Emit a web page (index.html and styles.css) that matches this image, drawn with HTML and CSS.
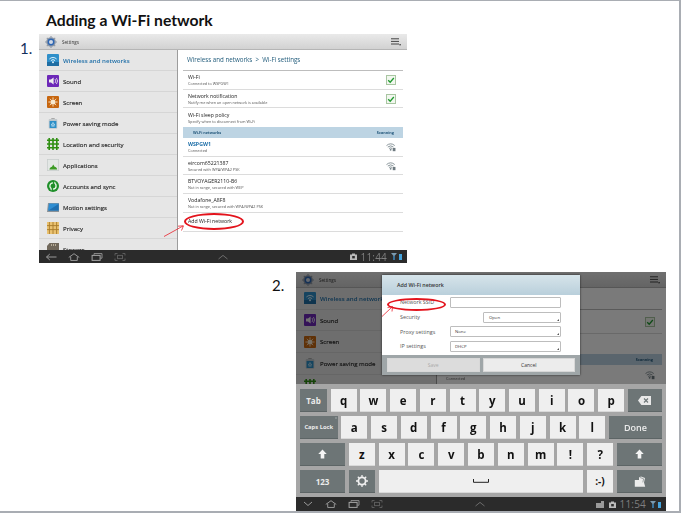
FILE: index.html
```html
<!DOCTYPE html>
<html lang="en">
<head>
<meta charset="utf-8">
<title>Adding a Wi-Fi network</title>
<link rel="stylesheet" href="styles.css">
</head>
<body>
<svg class="defs" width="0" height="0" aria-hidden="true">
  <symbol id="i-gear" viewBox="0 0 16 16"><circle cx="8" cy="8" r="6.4" fill="#8d97a5"/><circle cx="8" cy="8" r="4.6" fill="#2d66b3"/><circle cx="8" cy="8" r="2.7" fill="#cfd8e6"/><path d="M8 0v2M8 14v2M0 8h2M14 8h2M2.4 2.4l1.4 1.4M12.2 12.2l1.4 1.4M2.4 13.6l1.4-1.4M12.2 3.8l1.4-1.4" stroke="#8d97a5" stroke-width="1.5"/></symbol>
  <symbol id="i-wifi" viewBox="0 0 12 12"><rect width="12" height="12" rx="1" fill="#2f8fc9"/><rect y="8" width="12" height="4" fill="#1f6ea3"/><path d="M2.4 5a5 5 0 0 1 7.2 0M3.9 6.6a3 3 0 0 1 4.2 0" stroke="#d9f0fb" fill="none"/><circle cx="6" cy="8.3" r="1" fill="#d9f0fb"/></symbol>
  <symbol id="i-sound" viewBox="0 0 12 12"><rect width="12" height="12" rx="1" fill="#6d28b8"/><path d="M2 4.6h2L6.6 2.6v6.8L4 7.4H2z" fill="#eee"/><path d="M8 4a3 3 0 0 1 0 4M9.4 3a4.6 4.6 0 0 1 0 6" stroke="#eee" fill="none" stroke-width=".8"/></symbol>
  <symbol id="i-screen" viewBox="0 0 12 12"><rect width="12" height="12" rx="1" fill="#c7660f"/><circle cx="6" cy="6" r="2.6" fill="#f7e9d0"/><path d="M6 1.4v1.6M6 9v1.6M1.4 6H3M9 6h1.6M2.8 2.8l1.1 1.1M8.1 8.1l1.1 1.1M2.8 9.2l1.1-1.1M8.1 3.9l1.1-1.1" stroke="#f7e9d0" stroke-width=".9"/></symbol>
  <symbol id="i-power" viewBox="0 0 12 14"><path d="M4 1.4h4v1.2H4z" fill="#9a9a9a"/><rect x="1" y="2.4" width="10" height="11.2" rx="1" fill="#c3c9cc"/><rect x="2" y="4.6" width="8" height="8.2" fill="#2c8fc7"/><path d="M4 9.4l2-3 2 3zM4.2 10.6h3.6" stroke="#dff2fb" stroke-width=".8" fill="none"/></symbol>
  <symbol id="i-grid" viewBox="0 0 12 12"><path d="M0 2.2h12M0 6h12M0 9.8h12M2.2 0v12M6 0v12M9.8 0v12" stroke="#2f8f12" stroke-width="1.6"/></symbol>
  <symbol id="i-apps" viewBox="0 0 12 12"><rect width="12" height="12" fill="#c9cfcd"/><rect x=".8" y=".8" width="10.4" height="10.4" fill="#e3e7e5"/><path d="M2.4 10.6c.4-2.2 1.6-2.6 2.6-2.8l1.2-2.2 1.4 2.2c1.2.2 2.2.6 2.6 2.8z" fill="#3c9b24"/></symbol>
  <symbol id="i-sync" viewBox="0 0 12 12"><circle cx="6" cy="6" r="6" fill="#1f8f2a"/><circle cx="6" cy="6" r="3.1" fill="none" stroke="#e8f6e6" stroke-width="1.3"/><path d="M6 .8l2.6 2.2L6 5zM6 11.2L3.4 9 6 7z" fill="#1f8f2a"/><path d="M7.6 1.6l1.4 1.6-2 .5zM4.4 10.4L3 8.8l2-.5z" fill="#e8f6e6"/></symbol>
  <symbol id="i-motion" viewBox="0 0 12 10"><path d="M1 1h11v9H0z" fill="#8b9298"/><path d="M2 1.6h9.6v7H1z" fill="#2f8ed2"/><path d="M1.4 8.6L11.6 2v6.6z" fill="#1f6fb0"/></symbol>
  <symbol id="i-privacy" viewBox="0 0 12 12"><rect width="12" height="12" fill="#eac271"/><path d="M0 3.6h12M0 7.6h12M2.4 0v12M6 0v12M9.6 0v12" stroke="#a87a2a" stroke-width=".9"/></symbol>
  <symbol id="i-storage" viewBox="0 0 12 12"><path d="M2.5 0H12v12H0V3z" fill="#70675a"/><path d="M4 1h1v2H4zM6 1h1v2H6zM8 1h1v2H8z" fill="#b7ad98"/></symbol>
  <symbol id="i-check" viewBox="0 0 10 10"><rect x=".5" y=".5" width="9" height="9" fill="#f2f7ef" stroke="#a9c6a2"/><path d="M2.2 5.2l2 2 3.6-4.2" stroke="#1f9a2f" stroke-width="1.3" fill="none"/></symbol>
  <symbol id="i-signal" viewBox="0 0 11 10"><path d="M.6 3.4a7 7 0 0 1 9 0M2 5a5 5 0 0 1 6.2 0M3.4 6.6a2.8 2.8 0 0 1 3.4 0" stroke="#7d8a90" stroke-width="1" fill="none"/><circle cx="5.1" cy="8" r="1" fill="#7d8a90"/><rect x="7.4" y="6" width="3" height="3.6" fill="#6e7a80"/></symbol>
  <symbol id="i-menu" viewBox="0 0 10 8"><path d="M0 .8h8M0 3.4h8M0 6h8" stroke="#444" stroke-width="1"/><rect x="8.4" y="6" width="1.4" height="1.4" fill="#444"/></symbol>
  <symbol id="i-back" viewBox="0 0 12 8"><path d="M11.5 4H1.5M4.8 1L1.5 4l3.3 3" stroke="#9a9a9a" fill="none"/></symbol>
  <symbol id="i-down" viewBox="0 0 12 8"><path d="M2 2l4 3.5L10 2" stroke="#9a9a9a" fill="none"/></symbol>
  <symbol id="i-home" viewBox="0 0 13 9"><path d="M.6 5L6.5.8 12.4 5M2.8 4v4.4h7.4V4" stroke="#a4a4a4" fill="none"/></symbol>
  <symbol id="i-recent" viewBox="0 0 11 8"><path d="M2.5 1.8V.6h8v4.6H9" stroke="#8e8e8e" fill="none"/><rect x=".6" y="2.4" width="8" height="5" fill="none" stroke="#a4a4a4"/></symbol>
  <symbol id="i-shot" viewBox="0 0 11 8"><path d="M.5 2.5V.5h2.5M8 .5h2.500v2M10.500 5.500v2H8M3 7.500H.5v-2" stroke="#5c5c5c" fill="none"/><rect x="3" y="2.400" width="5" height="3.200" fill="none" stroke="#5c5c5c"/></symbol>
  <symbol id="i-up" viewBox="0 0 12 6"><path d="M1.500 5L6 1.400 10.500 5" stroke="#6c6c6c" fill="none"/></symbol>
  <symbol id="i-cam" viewBox="0 0 7 7"><path d="M0 1.500h2V.4h3v1.100h2V7H0z" fill="#bbb"/><rect x="2.200" y="3" width="2.600" height="2.400" fill="#2c2c2c"/></symbol>
  <symbol id="i-sd" viewBox="0 0 8 7"><path d="M0 2h5V0h3v7H0z" fill="#9a9a9a"/></symbol>
  <symbol id="i-stat" viewBox="0 0 11 7"><path d="M0 0h6L3 3.500z" fill="#7a9ab0"/><path d="M2.300 3h1.400v4H2.300z" fill="#3f8fc8"/><rect x="8" y="1" width="3" height="6" fill="#45a3dc"/></symbol>
  <symbol id="i-shift" viewBox="0 0 10 11"><path d="M5 .5L9.700 5.500H7V10.500H3V5.500H.3z" fill="#f4f4f4"/></symbol>
  <symbol id="i-bksp" viewBox="0 0 13 9"><path d="M3.400 0H13V9H3.400L0 4.500z" fill="#e8e8e8"/><path d="M6 2.500l4 4M10 2.500l-4 4" stroke="#6c7576" stroke-width="1.100"/></symbol>
  <symbol id="i-kgear" viewBox="0 0 12 12"><circle cx="6" cy="6" r="3.600" fill="none" stroke="#efefef" stroke-width="1.800"/><path d="M6 0v2.400M6 9.600V12M0 6h2.400M9.600 6H12M1.800 1.800l1.700 1.700M8.500 8.500l1.700 1.700M1.800 10.200l1.700-1.700M8.500 3.500l1.700-1.700" stroke="#efefef" stroke-width="1.300"/></symbol>
  <symbol id="i-clip" viewBox="0 0 12 11"><path d="M.8 4H5V1.500l2-1 4 1.500-1 4.500 1.200 4.200H.8z" fill="#ececec"/><path d="M6 1.500l3.600 1.300-.8 3.600" stroke="#7a8283" stroke-width=".7" fill="none"/></symbol>
  <symbol id="i-space" viewBox="0 0 16 4"><path d="M.5 0v3.300h15V0" stroke="#222" stroke-width="1" fill="none"/></symbol>
</svg>

<main class="slide">
  <h1 class="slide-title">Adding a Wi-Fi network</h1>

  <section class="step step-one">
    <span class="step-num">1.</span>
    <div class="screen screen-one">
      <div class="stage">
        <header class="titlebar">
          <svg class="app-gear"><use href="#i-gear"/></svg>
          <span class="app-name">Settings</span>
          <svg class="menu-btn"><use href="#i-menu"/></svg>
        </header>
        <div class="panes">
          <nav class="side">
            <div class="side-row active"><svg class="side-icon"><use href="#i-wifi"/></svg>Wireless and networks</div>
            <div class="side-row"><svg class="side-icon"><use href="#i-sound"/></svg>Sound</div>
            <div class="side-row"><svg class="side-icon"><use href="#i-screen"/></svg>Screen</div>
            <div class="side-row"><svg class="side-icon"><use href="#i-power"/></svg>Power saving mode</div>
            <div class="side-row"><svg class="side-icon"><use href="#i-grid"/></svg>Location and security</div>
            <div class="side-row"><svg class="side-icon"><use href="#i-apps"/></svg>Applications</div>
            <div class="side-row"><svg class="side-icon"><use href="#i-sync"/></svg>Accounts and sync</div>
            <div class="side-row"><svg class="side-icon"><use href="#i-motion"/></svg>Motion settings</div>
            <div class="side-row"><svg class="side-icon"><use href="#i-privacy"/></svg>Privacy</div>
            <div class="side-row"><svg class="side-icon"><use href="#i-storage"/></svg>Storage</div>
          </nav>
          <div class="detail">
            <div class="crumb">Wireless and networks &nbsp;&gt;&nbsp; Wi-Fi settings</div>
            <div class="list">
              <div class="item"><div><div class="item-name">Wi-Fi</div><div class="item-sub">Connected to WSPGW1</div></div><svg class="check"><use href="#i-check"/></svg></div>
              <div class="item"><div><div class="item-name">Network notification</div><div class="item-sub">Notify me when an open network is available</div></div><svg class="check"><use href="#i-check"/></svg></div>
              <div class="item last"><div><div class="item-name">Wi-Fi sleep policy</div><div class="item-sub">Specify when to disconnect from Wi-Fi</div></div></div>
              <div class="group"><span>Wi-Fi networks</span><span>Scanning</span></div>
              <div class="item"><div><div class="item-name linked">WSPGW1</div><div class="item-sub">Connected</div></div><svg class="signal"><use href="#i-signal"/></svg></div>
              <div class="item"><div><div class="item-name">eircom65221387</div><div class="item-sub">Secured with WPA/WPA2 PSK</div></div><svg class="signal"><use href="#i-signal"/></svg></div>
              <div class="item"><div><div class="item-name">BTVOYAGER2110-B6</div><div class="item-sub">Not in range, secured with WEP</div></div></div>
              <div class="item"><div><div class="item-name">Vodafone_A8F8</div><div class="item-sub">Not in range, secured with WPA/WPA2 PSK</div></div></div>
              <div class="item"><div class="item-name">Add Wi-Fi network</div></div>
            </div>
          </div>
        </div>
      </div>
      <footer class="navbar">
        <svg class="nav-icon"><use href="#i-back"/></svg>
        <svg class="nav-icon"><use href="#i-home"/></svg>
        <svg class="nav-icon"><use href="#i-recent"/></svg>
        <svg class="nav-icon"><use href="#i-shot"/></svg>
        <svg class="nav-up"><use href="#i-up"/></svg>
        <span class="tray">
          <svg class="tray-cam"><use href="#i-cam"/></svg>
          <span class="clock">11:44</span>
          <svg class="tray-stat"><use href="#i-stat"/></svg>
        </span>
      </footer>
      <span class="ring ring-one"></span>
      <svg class="pointer pointer-one" viewBox="0 0 22 13"><path d="M1 12.500L20 2M15 2.200L20.500 1.800 18.500 6.500" fill="none" stroke="#e8202a" stroke-width=".8"/></svg>
    </div>
  </section>

  <section class="step step-two">
    <span class="step-num">2.</span>
    <div class="screen screen-two">
      <div class="stage stage-dim">
        <header class="titlebar">
          <svg class="app-gear"><use href="#i-gear"/></svg>
          <span class="app-name">Settings</span>
          <svg class="menu-btn"><use href="#i-menu"/></svg>
        </header>
        <div class="panes">
          <nav class="side">
            <div class="side-row active"><svg class="side-icon"><use href="#i-wifi"/></svg>Wireless and networks</div>
            <div class="side-row"><svg class="side-icon"><use href="#i-sound"/></svg>Sound</div>
            <div class="side-row"><svg class="side-icon"><use href="#i-screen"/></svg>Screen</div>
            <div class="side-row"><svg class="side-icon"><use href="#i-power"/></svg>Power saving mode</div>
            <div class="side-row"><svg class="side-icon"><use href="#i-grid"/></svg></div>
          </nav>
          <div class="detail">
            <div class="crumb"></div>
            <div class="list">
              <div class="item"><span></span><svg class="check"><use href="#i-check"/></svg></div>
              <div class="item last"></div>
              <div class="group"><span></span><span>Scanning</span></div>
              <div class="item"><div><div class="item-name">&nbsp;</div><div class="item-sub">Connected</div></div><svg class="signal"><use href="#i-signal"/></svg></div>
            </div>
          </div>
        </div>
        <div class="scrim"></div>
        <div class="dialog">
          <div class="dialog-head">Add Wi-Fi network</div>
          <div class="dialog-body">
            <div class="field"><span>Network SSID</span><span class="control"></span></div>
            <div class="field"><span>Security</span><span class="control short pick">Open</span></div>
            <div class="field"><span>Proxy settings</span><span class="control pick">None</span></div>
            <div class="field"><span>IP settings</span><span class="control pick">DHCP</span></div>
          </div>
          <div class="dialog-foot">
            <span class="dlg-btn off">Save</span>
            <span class="dlg-btn">Cancel</span>
          </div>
        </div>
      </div>
      <div class="keyboard">
        <div class="kb-row">
          <span class="key fn w-tab">Tab</span>
          <span class="key">q</span><span class="key">w</span><span class="key">e</span><span class="key">r</span><span class="key">t</span><span class="key">y</span><span class="key">u</span><span class="key">i</span><span class="key">o</span><span class="key">p</span>
          <span class="key fn w-bksp"><svg class="k-bksp"><use href="#i-bksp"/></svg></span>
        </div>
        <div class="kb-row">
          <span class="key fn w-caps small">Caps Lock</span>
          <span class="key">a</span><span class="key">s</span><span class="key">d</span><span class="key">f</span><span class="key">g</span><span class="key">h</span><span class="key">j</span><span class="key">k</span><span class="key">l</span>
          <span class="key fn w-done">Done</span>
        </div>
        <div class="kb-row">
          <span class="key fn w-shift"><svg class="k-shift"><use href="#i-shift"/></svg></span>
          <span class="key">z</span><span class="key">x</span><span class="key">c</span><span class="key">v</span><span class="key">b</span><span class="key">n</span><span class="key">m</span><span class="key">!</span><span class="key">?</span>
          <span class="key fn w-shift"><svg class="k-shift"><use href="#i-shift"/></svg></span>
        </div>
        <div class="kb-row">
          <span class="key fn w-shift num">123</span>
          <span class="key fn"><svg class="k-gear"><use href="#i-kgear"/></svg></span>
          <span class="key w-space"><svg class="k-space"><use href="#i-space"/></svg></span>
          <span class="key smile">:-)</span>
          <span class="key fn w-shift"><svg class="k-clip"><use href="#i-clip"/></svg></span>
        </div>
      </div>
      <footer class="navbar">
        <svg class="nav-icon"><use href="#i-down"/></svg>
        <svg class="nav-icon"><use href="#i-home"/></svg>
        <svg class="nav-icon"><use href="#i-recent"/></svg>
        <svg class="nav-icon"><use href="#i-shot"/></svg>
        <svg class="nav-up"><use href="#i-up"/></svg>
        <span class="tray">
          <svg class="tray-sd"><use href="#i-sd"/></svg>
          <svg class="tray-cam"><use href="#i-cam"/></svg>
          <span class="clock">11:54</span>
          <svg class="tray-stat"><use href="#i-stat"/></svg>
        </span>
      </footer>
      <span class="ring ring-two"></span>
      <svg class="pointer pointer-two" viewBox="0 0 13 12"><path d="M1 11.500L11 2M6.500 2.600L11.500 1.500 11 6.500" fill="none" stroke="#e8202a" stroke-width=".8"/></svg>
    </div>
  </section>
</main>
</body>
</html>
```

FILE: styles.css
```css
* { box-sizing: border-box; }
html, body { margin: 0; padding: 0; background: #fff; }
body { width: 681px; height: 513px; overflow: hidden; font-family: "Open Sans", "Liberation Sans", sans-serif; }
.defs { position: absolute; }
svg { display: block; }

.slide {
  width: 681px;
  height: 513px;
  border-top: 1px solid #a9adb3;
  border-right: 2px solid #a9adb3;
  border-bottom: 2px solid #a9adb3;
  overflow: hidden;
}
.slide-title {
  margin: 0 0 0 46px;
  height: 33px;
  padding-top: 9px;
  font: bold 15.7px/20px Lato, "Open Sans", sans-serif;
  color: #111;
}
.step { display: flex; align-items: flex-start; }
.step-one { padding-left: 20px; }
.step-two { padding-left: 272px; margin-top: 9px; }
.step-num {
  width: 19px;
  padding-top: 6px;
  font: 15px/16px Lato, sans-serif;
  color: #12305c;
}
.step-two .step-num { width: 24px; padding-top: 5px; color: #111; }

.screen { position: relative; filter: blur(.4px); overflow: hidden; display: flex; flex-direction: column; }
.screen-one { width: 368px; height: 229px; }
.screen-two { width: 370px; height: 239px; }

.stage { position: relative; display: flex; flex-direction: column; flex: 1; min-height: 0; overflow: hidden; }
.titlebar {
  flex: none;
  height: 16px;
  display: flex;
  align-items: center;
  padding: 0 6px;
  background: linear-gradient(#e9e9e9, #d2d2d2);
  border-bottom: 1px solid #b5b5b5;
}
.app-gear { width: 12px; height: 12px; }
.app-name { margin-left: 5px; font-size: 4.6px; color: #333; }
.menu-btn { width: 10px; height: 8px; margin-left: auto; }

.panes { flex: 1; display: flex; min-height: 0; }
.side { flex: none; width: 139px; background: #e6e6e6; border-right: 1px solid #9c9c9c; overflow: hidden; }
.side-row {
  height: 21px;
  display: flex;
  align-items: center;
  padding-left: 8px;
  font-size: 6.1px;
  color: #2c2c2c;
  border-bottom: 1px solid #d6d6d6;
  -webkit-text-stroke: .15px #2c2c2c;
}
.side-row.active { color: #1f6fa8; font-weight: 600; -webkit-text-stroke: 0; }
.side-icon { width: 12px; height: 12px; margin-right: 4px; flex: none; }
.detail { flex: 1; background: #fff; padding: 0 4px 0 5px; min-width: 0; }
.crumb {
  height: 21px;
  padding: 5px 0 0 4px;
  font-size: 6.2px;
  line-height: 10px;
  color: #1f5a7a;
  border-bottom: 1px solid #bdbdbd;
}
.item {
  height: 18.7px;
  display: flex;
  align-items: center;
  justify-content: space-between;
  padding: 0 7px 0 5px;
  border-bottom: 1px solid #dcdcdc;
}
.item.last { border-bottom: 0; }
.item-name { font-size: 5.2px; line-height: 7px; color: #222; }
.item-name.linked { color: #1f6fa8; font-weight: 700; }
.item-sub { font-size: 3.8px; line-height: 5px; color: #555; }
.check { width: 10px; height: 10px; }
.signal { width: 10px; height: 10px; }
.group {
  height: 11px;
  display: flex;
  justify-content: space-between;
  align-items: center;
  padding: 0 9px 0 10px;
  background: #bdd4e3;
  font-size: 3.8px;
  font-weight: 700;
  color: #1f5478;
}

.navbar {
  flex: none;
  height: 13px;
  display: flex;
  align-items: center;
  gap: 11px;
  padding-left: 6px;
  background: #2b2b2b;
}
.screen-two .navbar { height: 14px; }
.nav-icon { width: 12px; height: 8px; flex: none; }
.nav-up { width: 12px; height: 6px; margin-left: 80px; }
.tray { margin-left: auto; display: flex; align-items: center; gap: 4px; padding-right: 5px; }
.tray-cam { width: 7px; height: 7px; }
.tray-sd { width: 8px; height: 7px; margin-right: 1px; }
.tray-stat { width: 11px; height: 7px; }
.clock { font-size: 10px; line-height: 12px; color: #7f7f7f; letter-spacing: .2px; }

.ring { position: absolute; border: 2px solid #e3131c; border-radius: 50%; }
.ring-one { left: 145px; top: 179px; width: 60px; height: 17px; }
.ring-two { left: 91px; top: 26px; width: 59px; height: 13px; }
.pointer { position: absolute; }
.pointer-one { left: 124px; top: 190px; width: 22px; height: 13px; }
.pointer-two { left: 85px; top: 33px; width: 13px; height: 12px; }

.stage-dim .side-row { height: 21.7px; }
.stage-dim .side { width: 141px; }
.stage-dim .detail { padding: 0 4px; }
.stage-dim .crumb { height: 22px; }
.stage-dim .item { height: 20px; }
.stage-dim .item:first-child { height: 24px; }
.scrim { position: absolute; inset: 0; background: rgba(0, 0, 0, .52); }
.dialog {
  position: absolute;
  left: 86px;
  top: 3px;
  width: 198px;
  height: 100px;
  display: flex;
  flex-direction: column;
  box-shadow: 0 0 2px rgba(0, 0, 0, .7);
}
.dialog-head {
  height: 20px;
  padding-left: 15px;
  background: linear-gradient(#d6e4ea, #b9cfdb);
  font-size: 5.3px;
  line-height: 20px;
  font-weight: 600;
  color: #333;
}
.dialog-body { height: 60px; background: #fff; }
.field {
  height: 14.7px;
  display: flex;
  align-items: center;
  justify-content: space-between;
  padding: 0 19px 0 18px;
  font-size: 5.4px;
  color: #555;
}
.control {
  position: relative;
  width: 111px;
  height: 11px;
  padding-left: 4px;
  border: 1px solid #bdbdbd;
  border-radius: 1px;
  font-size: 4.3px;
  line-height: 9px;
  color: #333;
  background: #fff;
}
.control.short { width: 78px; padding-left: 5px; }
.pick::after {
  content: "";
  position: absolute;
  right: 1px;
  bottom: 1px;
  border: 1.5px solid transparent;
  border-right-color: #555;
  border-bottom-color: #555;
}
.dialog-foot {
  height: 20px;
  display: flex;
  gap: 3px;
  padding: 3px 5px;
  background: #9fa6a8;
}
.dlg-btn {
  flex: 1;
  background: #ececec;
  border: 1px solid #d8d8d8;
  font-size: 5px;
  line-height: 12px;
  text-align: center;
  color: #333;
}
.dlg-btn.off { background: #dcdcdc; color: #aaa; }

.keyboard {
  flex: none;
  height: 113px;
  padding: 5px 4px 0;
  display: flex;
  flex-direction: column;
  gap: 4px;
  background: #a6a6a6;
}
.kb-row { width: 362px; height: 23px; display: flex; justify-content: space-between; }
.key {
  position: relative;
  width: 26px;
  height: 23px;
  display: flex;
  align-items: center;
  justify-content: center;
  background: #efefef;
  border-bottom: 1px solid #d9d9d9;
  font-size: 11.5px;
  font-weight: 700;
  color: #111;
}
.key.fn { background: #6d7576; color: #ececec; font-size: 8px; border-bottom-color: #5d6566; }
.key.small { font-size: 5.8px; }
.key.small::after {
  content: "";
  position: absolute;
  right: 1px;
  top: 1px;
  width: 2px;
  height: 2px;
  border-radius: 50%;
  background: #8f9798;
}
.w-tab { width: 27px; }
.w-bksp { width: 34px; }
.w-caps { width: 37.5px; }
.w-done { width: 53px; }
.key.w-done { font-size: 9px; font-weight: 600; }
.w-shift { width: 45px; }
.w-space { width: 204px; }
.key.smile { font-size: 10px; }
.key.num { font-size: 8px; }
.k-bksp { width: 13px; height: 9px; }
.k-shift { width: 9px; height: 10px; }
.k-gear { width: 12px; height: 12px; }
.k-clip { width: 12px; height: 11px; }
.k-space { width: 16px; height: 4px; }
```
